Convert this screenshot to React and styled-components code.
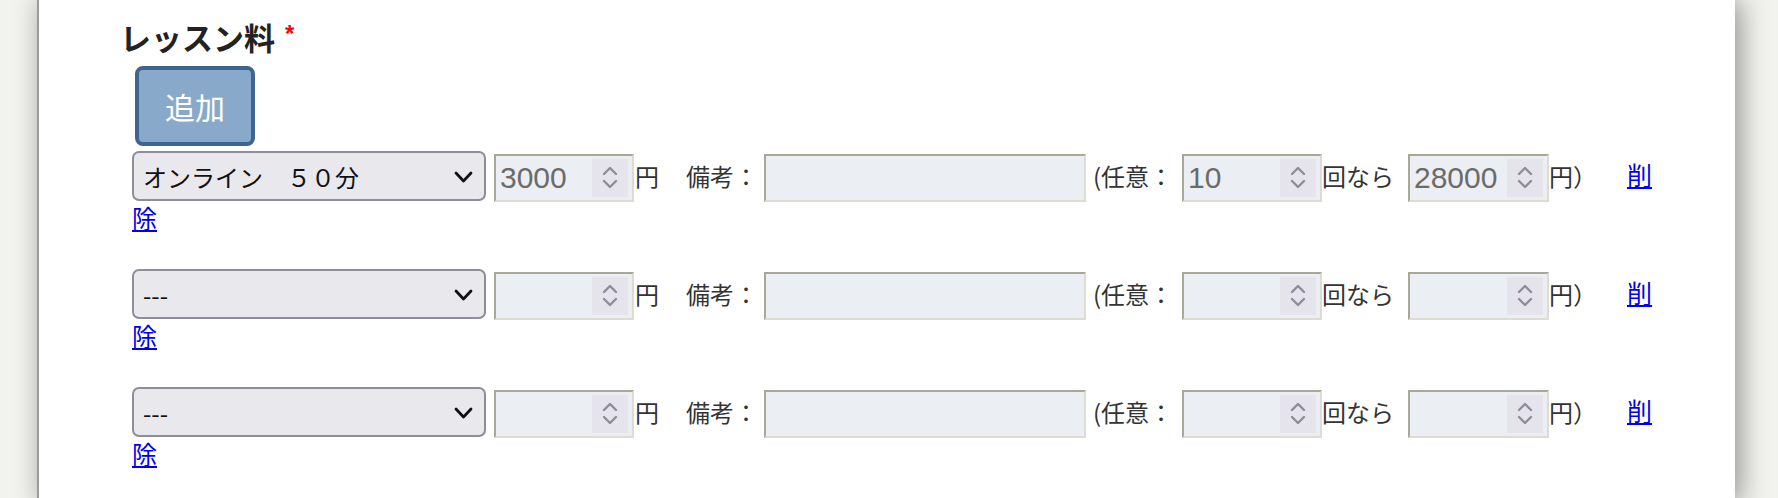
import React from 'react';
import styled, { createGlobalStyle } from 'styled-components';

const GlobalStyle = createGlobalStyle`
  html, body { margin: 0; padding: 0; }
  body {
    background: #f2f2ee;
    font-family: "Noto Sans CJK JP", "Noto Sans", sans-serif;
  }
`;

const Page = styled.div`
  display: flex;
  min-height: 498px;
  overflow: hidden;
  background: #f2f2ee;
`;

const Panel = styled.main`
  margin-left: 37px;
  width: 1698px;
  flex: 0 0 1698px;
  box-sizing: border-box;
  border-left: 2px solid #9a9a9a;
  background: #fff;
  box-shadow: 5px 0 26px rgba(0, 0, 0, 0.4);
  padding: 19px 0 0 81px;
`;

const FieldTitle = styled.h2`
  display: flex;
  align-items: flex-start;
  margin: 0;
  height: 36px;
  font-size: 31px;
  line-height: 36px;
  font-weight: 700;
  color: #222;
`;

const Required = styled.span`
  font-family: "Liberation Sans", Arial, sans-serif;
  font-size: 24px;
  line-height: 24px;
  font-weight: 700;
  color: #f00;
  margin: 3px 0 0 10px;
`;

const FieldBody = styled.div`
  margin-left: 12px;
`;

const AddButton = styled.button`
  display: block;
  width: 120px;
  height: 80px;
  margin: 11px 0 4px 3px;
  padding: 0;
  box-sizing: border-box;
  border: 4px solid #3e6590;
  border-radius: 8px;
  background: #89a9cb;
  color: #fff;
  font-family: "Noto Sans CJK JP", sans-serif;
  font-size: 30px;
  cursor: pointer;
`;

const Row = styled.div`
  margin-bottom: 36px;
`;

const Line = styled.div`
  display: flex;
  align-items: flex-start;
  height: 52px;
  white-space: nowrap;
`;

const WrapLine = styled.div`
  height: 30px;
  line-height: 30px;
`;

const SelectWrap = styled.div`
  position: relative;
  flex: 0 0 354px;
  width: 354px;
  height: 50px;
  margin-top: 1px;
`;

const Select = styled.select`
  appearance: none;
  -webkit-appearance: none;
  width: 100%;
  height: 100%;
  box-sizing: border-box;
  margin: 0;
  padding: 0 40px 0 9px;
  border: 2px solid #8f8d9a;
  border-radius: 7px;
  background: #e9e8ed;
  color: #111;
  font-family: "Noto Sans CJK JP", sans-serif;
  font-size: 24px;
  outline: none;
`;

const SelectChevron = styled.svg`
  position: absolute;
  left: 322px;
  top: 20px;
  width: 19px;
  height: 12px;
  pointer-events: none;
`;

const FieldBox = styled.div`
  display: flex;
  align-items: center;
  box-sizing: border-box;
  flex: 0 0 ${(p) => p.$w}px;
  width: ${(p) => p.$w}px;
  min-width: 0;
  height: 48px;
  margin-top: 4px;
  padding: 0 4px;
  border: 2px solid;
  border-color: #a9a797 #dddcd0 #dddcd0 #a9a797;
  background: #ebeff3;
`;

const NumberInput = styled.input`
  flex: 1 1 0;
  width: 0;
  min-width: 0;
  height: 100%;
  margin: 0;
  padding: 0;
  border: 0;
  outline: none;
  background: transparent;
  font-family: "Liberation Sans", Arial, sans-serif;
  font-size: 30px;
  color: #6b6b6b;
  appearance: textfield;
  -moz-appearance: textfield;
  &::-webkit-inner-spin-button,
  &::-webkit-outer-spin-button {
    -webkit-appearance: none;
    margin: 0;
  }
`;

const TextInput = styled.input`
  flex: 1 1 0;
  width: 0;
  min-width: 0;
  height: 100%;
  margin: 0;
  padding: 0;
  border: 0;
  outline: none;
  background: transparent;
  font-family: "Noto Sans CJK JP", sans-serif;
  font-size: 24px;
  color: #333;
`;

const Spinner = styled.span`
  flex: 0 0 36px;
  height: 38px;
  display: flex;
  background: #e5e4ea;
`;

const Label = styled.span`
  flex: 0 0 ${(p) => p.$w}px;
  width: ${(p) => p.$w}px;
  box-sizing: border-box;
  padding-left: ${(p) => p.$pad || 0}px;
  height: 52px;
  line-height: 52px;
  font-size: 24px;
  color: #333;
`;

const DeleteLink = styled.a`
  display: inline-block;
  font-family: "Noto Sans CJK JP", sans-serif;
  font-size: 25px;
  line-height: ${(p) => p.$lh}px;
  color: #0000ee;
  text-decoration: underline;
  cursor: pointer;
`;

const SpinIcon = () => (
  <svg width="36" height="38" viewBox="0 0 36 38" aria-hidden="true">
    <path
      d="M12 15 L18 9 L24 15 M12 22 L18 28 L24 22"
      fill="none"
      stroke="#8e8c99"
      strokeWidth="2.4"
      strokeLinecap="round"
      strokeLinejoin="round"
    />
  </svg>
);

const NumberField = ({ w, value }) => (
  <FieldBox $w={w}>
    <NumberInput type="number" defaultValue={value} />
    <Spinner>
      <SpinIcon />
    </Spinner>
  </FieldBox>
);

const rows = [
  { plan: 'online50', price: '3000', times: '10', total: '28000' },
  { plan: '', price: '', times: '', total: '' },
  { plan: '', price: '', times: '', total: '' },
];

const FeeRow = ({ row }) => (
  <Row>
    <Line>
      <SelectWrap>
        <Select defaultValue={row.plan}>
          <option value="">---</option>
          <option value="online50">オンライン　５０分</option>
          <option value="online25">オンライン　２５分</option>
          <option value="face50">対面　５０分</option>
        </Select>
        <SelectChevron viewBox="0 0 19 12" aria-hidden="true">
          <path
            d="M2 2 L9.5 10 L17 2"
            fill="none"
            stroke="#111"
            strokeWidth="2.8"
            strokeLinecap="round"
            strokeLinejoin="round"
          />
        </SelectChevron>
      </SelectWrap>
      <Label $w={8} />
      <NumberField w={140} value={row.price} />
      <Label $w={52} $pad={1}>円</Label>
      <Label $w={78}>備考：</Label>
      <FieldBox $w={322}>
        <TextInput type="text" />
      </FieldBox>
      <Label $w={96} $pad={7}>(任意：</Label>
      <NumberField w={140} value={row.times} />
      <Label $w={86}>回なら</Label>
      <NumberField w={141} value={row.total} />
      <Label $w={78}>円）</Label>
      <DeleteLink href="#" $lh={48}>削</DeleteLink>
    </Line>
    <WrapLine>
      <DeleteLink href="#" $lh={30}>除</DeleteLink>
    </WrapLine>
  </Row>
);

export default function App() {
  return (
    <>
      <GlobalStyle />
      <Page>
        <Panel>
          <FieldTitle>
            レッスン料<Required>*</Required>
          </FieldTitle>
          <FieldBody>
            <AddButton type="button">追加</AddButton>
            {rows.map((row, i) => (
              <FeeRow key={i} row={row} />
            ))}
          </FieldBody>
        </Panel>
      </Page>
    </>
  );
}
